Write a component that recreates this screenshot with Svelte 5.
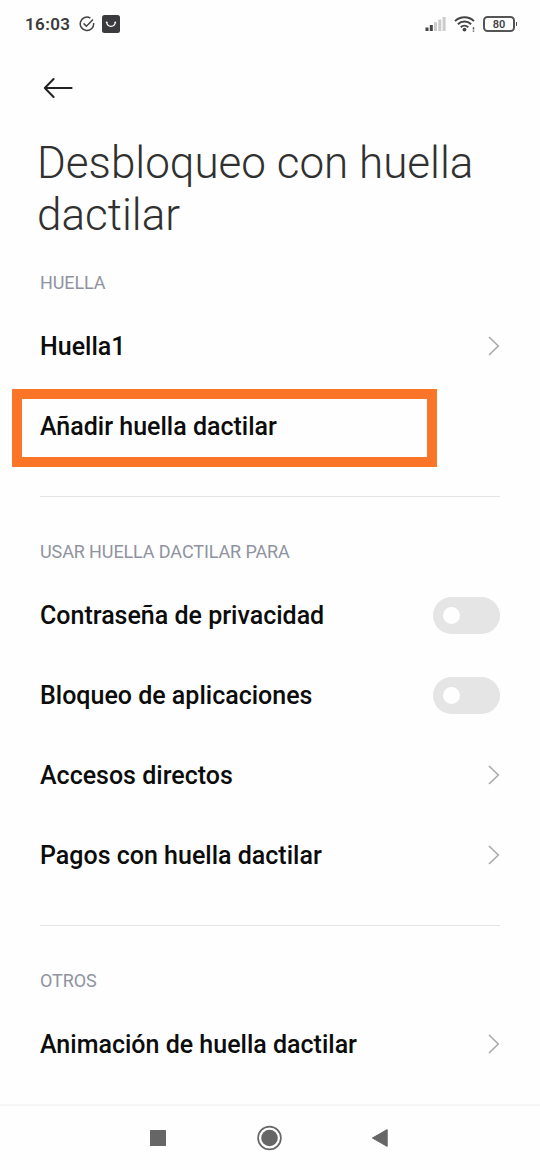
<script lang="ts">
  type Row = { label: string; type: 'link' | 'switch' | 'plain'; marked?: boolean };

  const sections: { title: string; rows: Row[] }[] = [
    {
      title: 'HUELLA',
      rows: [
        { label: 'Huella1', type: 'link' },
        { label: 'Añadir huella dactilar', type: 'plain', marked: true },
      ],
    },
    {
      title: 'USAR HUELLA DACTILAR PARA',
      rows: [
        { label: 'Contraseña de privacidad', type: 'switch' },
        { label: 'Bloqueo de aplicaciones', type: 'switch' },
        { label: 'Accesos directos', type: 'link' },
        { label: 'Pagos con huella dactilar', type: 'link' },
      ],
    },
    {
      title: 'OTROS',
      rows: [{ label: 'Animación de huella dactilar', type: 'link' }],
    },
  ];

  let enabled: Record<string, boolean> = $state({});
</script>

<div class="screen">
  <div class="status-bar">
    <span class="time">16:03</span>
    <svg class="check" width="16" height="16" viewBox="0 0 16 16">
      <path d="M11.4 2.1A6.7 6.7 0 1 0 14.6 7" />
      <path d="M4.6 7.4L7.4 10.2L14 3.4" />
    </svg>
    <svg class="bag" width="18" height="18" viewBox="0 0 18 18">
      <rect width="18" height="18" rx="2.5" fill="#3b3b3d" />
      <path d="M4.7 7.3c.6 5.4 8 5.4 8.6 0" fill="none" stroke="#fff" stroke-width="1.3" />
      <circle cx="4.7" cy="7.3" r="0.9" fill="#fff" />
      <circle cx="13.3" cy="7.3" r="0.9" fill="#fff" />
    </svg>
    <div class="indicators">
      <svg width="21" height="16" viewBox="0 0 21 16">
        <rect x="0.5" y="11.5" width="3" height="3.5" fill="#444" />
        <rect x="4.8" y="9" width="3" height="6" fill="#444" />
        <rect x="9" y="6.2" width="3" height="8.8" fill="#ccc" />
        <rect x="13.3" y="3.6" width="3" height="11.4" fill="#ccc" />
        <rect x="17.6" y="1" width="3" height="14" fill="#ccc" />
      </svg>
      <svg class="wifi" width="22" height="18" viewBox="0 0 22 18">
        <g fill="none" stroke="#444" stroke-width="2">
          <path d="M1 6.1a13.6 13.6 0 0 1 19 0" />
          <path d="M3.9 9.3a9.4 9.4 0 0 1 13.2 0" />
          <path d="M6.8 12.3a5.3 5.3 0 0 1 7.4 0" />
        </g>
        <circle cx="10.5" cy="14.6" r="1.9" fill="#444" />
        <path d="M19.5 12.2v2.4M19.5 15.4v1.4" stroke="#555" stroke-width="1.5" />
      </svg>
      <div class="battery">80</div>
    </div>
  </div>

  <div class="toolbar">
    <button class="back" aria-label="Atrás">
      <svg width="30" height="22" viewBox="0 0 30 22">
        <path d="M10.6 2L1.8 11L10.6 20M1.8 11H28.6" />
      </svg>
    </button>
  </div>

  <h1>Desbloqueo con huella dactilar</h1>

  <main>
    {#each sections as section}
      <section>
        <h2>{section.title}</h2>
        {#each section.rows as row}
          <div class="row" class:marked={row.marked}>
            <span class="label">{row.label}</span>
            {#if row.type === 'link'}
              <svg class="chevron" width="12" height="20" viewBox="0 0 12 20">
                <path d="M1 1L10.3 10L1 19" />
              </svg>
            {:else if row.type === 'switch'}
              <button
                class="switch"
                class:on={enabled[row.label]}
                role="switch"
                aria-label={row.label}
                aria-checked={!!enabled[row.label]}
                onclick={() => (enabled[row.label] = !enabled[row.label])}
              >
                <span class="knob"></span>
              </button>
            {/if}
          </div>
        {/each}
      </section>
    {/each}
  </main>

  <nav>
    <svg width="26" height="26" viewBox="0 0 26 26">
      <rect x="5" y="5" width="16" height="16" rx="0.6" fill="#666" />
    </svg>
    <svg width="26" height="26" viewBox="0 0 26 26">
      <circle cx="13.5" cy="13" r="11.4" fill="none" stroke="#666" stroke-width="1.7" />
      <circle cx="13.5" cy="13" r="8.3" fill="#666" />
    </svg>
    <svg width="26" height="26" viewBox="0 0 26 26">
      <path d="M5.4 13L20.2 4.6V21.4Z" fill="#666" stroke="#666" stroke-linejoin="round" />
    </svg>
  </nav>
</div>

<style>
  :global(body) {
    margin: 0;
    background: #fefefe;
  }

  .screen {
    display: flex;
    flex-direction: column;
    width: 540px;
    height: 1170px;
    overflow: hidden;
    background: #fefefe;
    font-family: Roboto, 'Liberation Sans', sans-serif;
    color: #0c0c0c;
  }

  button {
    padding: 0;
    border: none;
    background: none;
  }

  svg {
    display: block;
    flex: none;
  }

  /* Status bar */
  .status-bar {
    display: flex;
    flex: none;
    align-items: center;
    box-sizing: border-box;
    height: 50px;
    padding: 0 25px 2px;
  }

  .time {
    width: 54px;
    font-size: 17px;
    font-weight: 600;
    letter-spacing: 0.4px;
    color: #3a3a3a;
  }

  .check {
    fill: none;
    stroke: #444;
    stroke-width: 1.5;
  }

  .bag {
    margin-left: 7px;
  }

  .indicators {
    display: flex;
    align-items: center;
    margin-left: auto;
  }

  .wifi {
    margin: 0 7px 0 8px;
  }

  .battery {
    position: relative;
    box-sizing: border-box;
    width: 32px;
    height: 16px;
    border: 2px solid #555;
    border-radius: 4.5px;
    font-size: 11px;
    font-weight: 600;
    line-height: 13px;
    text-align: center;
    color: #444;
  }

  .battery::after {
    content: '';
    position: absolute;
    top: 4px;
    right: -4px;
    width: 1.5px;
    height: 4px;
    background: #555;
  }

  /* Header */
  .toolbar {
    display: flex;
    flex: none;
    align-items: center;
    height: 76px;
    padding-left: 43px;
  }

  .back path {
    fill: none;
    stroke: #222;
    stroke-width: 2;
    stroke-linecap: round;
    stroke-linejoin: round;
  }

  h1 {
    margin: 12px 38px 0 37px;
    font-size: 44px;
    font-weight: 300;
    line-height: 51.5px;
    color: #303030;
  }

  /* Settings list */
  main {
    flex: 1;
    margin-top: 31px;
  }

  section {
    margin: 0 40px;
    padding-bottom: 30px;
  }

  section + section {
    padding-top: 44px;
    border-top: 1px solid #e4e4e4;
  }

  section:last-child {
    padding-bottom: 0;
  }

  h2 {
    margin: 0 0 12px;
    font-size: 18px;
    font-weight: 400;
    line-height: 22px;
    letter-spacing: -0.11px;
    color: #8f939f;
  }

  .row {
    display: flex;
    align-items: center;
    justify-content: space-between;
    height: 80px;
  }

  .label {
    padding-top: 2px;
    font-size: 25px;
    font-weight: 500;
    line-height: 30px;
  }

  .marked {
    position: relative;
  }

  .marked::before {
    content: '';
    position: absolute;
    top: 3px;
    left: -28px;
    box-sizing: border-box;
    width: 425px;
    height: 78px;
    border: 10px solid #fb7528;
  }

  .chevron path {
    fill: none;
    stroke: #aaa;
    stroke-width: 1.6;
  }

  .switch {
    display: flex;
    align-items: center;
    width: 67px;
    height: 37px;
    padding: 0 10px;
    border-radius: 19px;
    background: #e5e5e5;
  }

  .switch.on {
    justify-content: flex-end;
    background: #2f86f6;
  }

  .knob {
    width: 17px;
    height: 17px;
    border-radius: 50%;
    background: #fefefe;
  }

  /* Navigation bar */
  nav {
    display: flex;
    flex: none;
    box-sizing: border-box;
    justify-content: space-between;
    align-items: center;
    height: 66px;
    padding: 0 147px 1px 145px;
    border-top: 2px solid #f6f6f6;
  }
</style>
